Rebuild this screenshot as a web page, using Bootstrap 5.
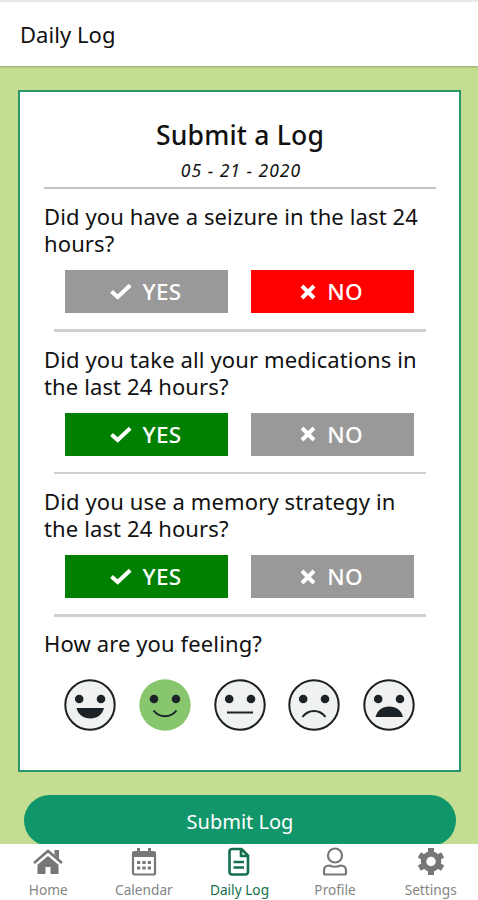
<!DOCTYPE html>
<html lang="en">
<head>
<meta charset="utf-8">
<meta name="viewport" content="width=device-width, initial-scale=1">
<title>Daily Log</title>
<link href="https://cdn.jsdelivr.net/npm/bootstrap@5.3.0/dist/css/bootstrap.min.css" rel="stylesheet">
<style>
body{font-family:"Noto Sans","Open Sans",sans-serif;color:#111;background:#c4dd93;height:900px;overflow:hidden}
.topbar{height:66px;border-top:2px solid #e8e8e8;padding:0 0 0 20px;box-shadow:0 1px 2px rgba(80,90,50,.45);flex:none}
.topbar h1{font-size:22px;line-height:30px;letter-spacing:.05px;margin:0;font-weight:400}
.page-body{flex:1 1 0;min-height:0;overflow:hidden;padding:23.500px 17px 0 18px}
.log-card{height:682px;border:2px solid #28976c;border-radius:0;padding:25px 23px 0 24px}
.log-title{font-size:26.500px;line-height:36px;font-weight:500;letter-spacing:.2px;margin:0}
.log-date{font-size:17.500px;line-height:24px;margin:5px 0 5px;padding-left:2px;font-style:italic;letter-spacing:1px}
.rule-full{height:2px;background:#c2c2c2;margin-bottom:.9px}
.rule-short{height:2.500px;background:#d0d0d0;margin:16.300px 10px 0 10px}
.question{font-size:22px;line-height:27px;margin:0;padding-top:13.700px;letter-spacing:.12px;white-space:nowrap;font-weight:450}
.answers{padding:13.300px 22px 0 21px;gap:23px}
.answer{height:42.700px;flex:1 1 0;border:0;border-radius:0;color:#fff;background:#999;font-size:22.500px;font-weight:500;letter-spacing:.3px;line-height:43px;padding:0 2px 0 0;gap:11px}
.answer.yes-on{background:#008000}
.answer.no-on{background:#f00}
.faces{padding:22px 21px 0 20px}
.submit{height:51px;margin:23.500px 5px 0 6px;background:#10966a;color:#fff;font-size:20px;line-height:30px;padding:3px 0 0;border:0;flex:none}
.tabs{height:56px;background:#fff;flex:none}
.tab{color:#858585;font-size:13.700px;line-height:18px;text-decoration:none;flex:1 1 0;padding:3px 0 0 1px}
.tab svg{margin-bottom:4px}
.tab.current{color:#12704c}
</style>
</head>
<body class="d-flex flex-column">
<svg class="d-none">
  <symbol id="check" viewBox="0 0 22 17"><path d="M1.500 8.500l6.200 5.500L20.200 2.200" fill="none" stroke="#fff" stroke-width="4"/></symbol>
  <symbol id="cross" viewBox="0 0 16 16"><path d="M2 2l12 12M14 2L2 14" fill="none" stroke="#fff" stroke-width="4"/></symbol>
  <symbol id="head" viewBox="0 0 52 52"><circle cx="26" cy="26" r="24.700" fill="#f0f1f1" stroke="#1c1f20" stroke-width="2"/><circle cx="15.200" cy="20" r="4.300" fill="#1c2326"/><circle cx="37" cy="20" r="4.300" fill="#1c2326"/></symbol>
</svg>
<header class="topbar bg-white d-flex align-items-center position-relative"><h1>Daily Log</h1></header>
<main class="page-body d-flex flex-column">
  <section class="log-card card flex-shrink-0">
    <h2 class="log-title text-center">Submit a Log</h2>
    <p class="log-date text-center">05 - 21 - 2020</p>
    <div class="rule-full"></div>
    <p class="question">Did you have a seizure in the last 24<br>hours?</p>
    <div class="answers d-flex">
      <button class="btn answer d-flex align-items-center justify-content-center"><svg width="22" height="17"><use href="#check"/></svg><span>YES</span></button>
      <button class="btn answer no-on d-flex align-items-center justify-content-center"><svg width="16" height="16"><use href="#cross"/></svg><span>NO</span></button>
    </div>
    <div class="rule-short"></div>
    <p class="question">Did you take all your medications in<br>the last 24 hours?</p>
    <div class="answers d-flex">
      <button class="btn answer yes-on d-flex align-items-center justify-content-center"><svg width="22" height="17"><use href="#check"/></svg><span>YES</span></button>
      <button class="btn answer d-flex align-items-center justify-content-center"><svg width="16" height="16"><use href="#cross"/></svg><span>NO</span></button>
    </div>
    <div class="rule-short"></div>
    <p class="question">Did you use a memory strategy in<br>the last 24 hours?</p>
    <div class="answers d-flex">
      <button class="btn answer yes-on d-flex align-items-center justify-content-center"><svg width="22" height="17"><use href="#check"/></svg><span>YES</span></button>
      <button class="btn answer d-flex align-items-center justify-content-center"><svg width="16" height="16"><use href="#cross"/></svg><span>NO</span></button>
    </div>
    <div class="rule-short"></div>
    <p class="question">How are you feeling?</p>
    <div class="faces d-flex justify-content-between">
      <svg width="52" height="52"><use href="#head"/><path d="M12.500 29h27.500c-1.500 6.500-7 10.500-13.700 10.500S14 35.500 12.500 29z" fill="#1c2326"/></svg>
      <svg width="52" height="52"><circle cx="26" cy="26" r="25.700" fill="#88c66e"/><circle cx="15" cy="20" r="4.300" fill="#1c2326"/><circle cx="37" cy="20" r="4.300" fill="#1c2326"/><path d="M14.500 31.500c6 7.500 17 7.500 23 0" fill="none" stroke="#1c2326" stroke-width="2"/></svg>
      <svg width="52" height="52"><use href="#head"/><path d="M13 33.500h26" stroke="#1c2326" stroke-width="2"/></svg>
      <svg width="52" height="52"><use href="#head"/><path d="M14.500 38c6-8 17-8 23 0" fill="none" stroke="#1c2326" stroke-width="2"/></svg>
      <svg width="52" height="52"><use href="#head"/><path d="M12.500 38c1.500-6.500 7-10.500 13.700-10.500S38.500 31.500 40 38z" fill="#1c2326"/></svg>
    </div>
  </section>
  <button class="btn submit rounded-pill">Submit Log</button>
</main>
<nav class="tabs d-flex">
  <a class="tab d-flex flex-column align-items-center" href="#"><svg width="32" height="30" viewBox="0 0 32 30"><path d="M2 16L16 4l14 12" fill="none" stroke="#777" stroke-width="2.600"/><path d="M22.500 3H27v9l-4.500-4zM16 9l10.500 8.700V27H18.500v-7h-5v7H5.500v-9.300z" fill="#777"/></svg>Home</a>
  <a class="tab d-flex flex-column align-items-center" href="#"><svg width="26" height="30" viewBox="0 0 26 30"><path d="M7.500 1v6M18.500 1v6" stroke="#777" stroke-width="3"/><path d="M3 4h20a2 2 0 0 1 2 2v4H1V6a2 2 0 0 1 2-2z" fill="#777"/><rect x="2" y="6" width="22" height="21.500" rx="1.500" fill="none" stroke="#777" stroke-width="2.200"/><path d="M6 15.500h14M6 21h14" stroke="#777" stroke-width="3.200" stroke-dasharray="3.200 2.200"/></svg>Calendar</a>
  <a class="tab current d-flex flex-column align-items-center" href="#"><svg width="24" height="30" viewBox="0 0 24 30" fill="none" stroke="#12704c" stroke-width="2.600"><path d="M5 2h9.500L21 8.500V25a2.500 2.500 0 0 1-2.500 2.500H5A2.500 2.500 0 0 1 2.500 25V4.500A2.500 2.500 0 0 1 5 2zM14 2v7h7M6.500 15h10.500M6.500 20.500h10.500"/></svg>Daily Log</a>
  <a class="tab d-flex flex-column align-items-center" href="#"><svg width="26" height="30" viewBox="0 0 26 30" fill="none" stroke="#777" stroke-width="2.200"><circle cx="13" cy="8.500" r="7"/><path d="M7.500 18.500c3 1.500 8 1.500 11 0 3.500 0 5.500 2 5.500 5V26a1.500 1.500 0 0 1-1.500 1.500h-19A1.500 1.500 0 0 1 2 26v-2.500c0-3 2-5 5.500-5z"/></svg>Profile</a>
  <a class="tab d-flex flex-column align-items-center" href="#"><svg width="28" height="30" viewBox="0 0 28 30"><circle cx="14" cy="14.500" r="7.500" fill="none" stroke="#777" stroke-width="5.500"/><path d="M14 1v6M14 22v6M2.300 7.800l5.200 3M20.500 18.200l5.200 3M2.300 21.200l5.200-3M20.500 10.800l5.200-3" stroke="#777" stroke-width="6"/></svg>Settings</a>
</nav>
<script src="https://cdn.jsdelivr.net/npm/bootstrap@5.3.0/dist/js/bootstrap.bundle.min.js"></script>
</body>
</html>
